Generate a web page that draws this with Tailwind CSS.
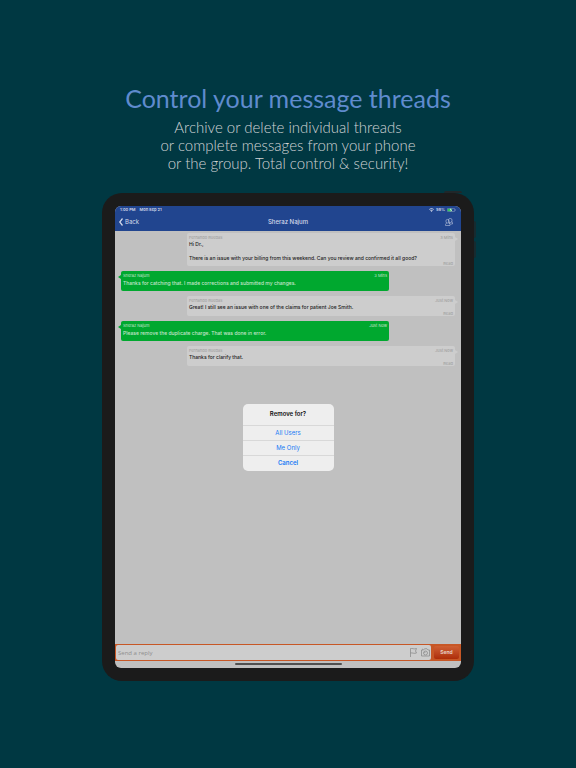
<!DOCTYPE html>
<html lang="en">
<head>
    <meta charset="UTF-8">
    <meta name="viewport" content="width=device-width, initial-scale=1.0">
    <title>Control your message threads</title>
    <script src="https://cdn.jsdelivr.net/npm/@tailwindcss/browser@4"></script>
</head>
<body class="bg-[#003842] min-h-screen font-['Inter',sans-serif]">
    <div class="flex flex-col items-center px-4 pt-20 pb-20">
        <!-- Headline -->
        <header class="text-center font-['Lato',sans-serif] mb-[21px]">
            <h1 class="text-[25px] leading-9 text-[#5f8bce]">Control your message threads</h1>
            <p class="text-[15px] leading-[18px] font-light text-[#d0d3d5] mt-0.5">
                Archive or delete individual threads<br>
                or complete messages from your phone<br>
                or the group. Total control &amp; security!
            </p>
        </header>

        <!-- Tablet -->
        <div class="relative w-full max-w-[372px] bg-[#1b1b1b] rounded-[20px] p-[13px]">
            <span class="absolute -top-0.5 right-3 w-[18px] h-0.5 bg-[#20272a] rounded-t-sm"></span>
            <span class="absolute top-7 -right-0.5 w-0.5 h-[17px] bg-[#162b30] rounded-r-sm"></span>
            <span class="absolute top-12 -right-0.5 w-0.5 h-[17px] bg-[#162b30] rounded-r-sm"></span>

            <div class="relative flex flex-col min-h-[462px] bg-[#c0c0c0] rounded-[6px] overflow-hidden">
                <!-- Status bar and navigation -->
                <div class="bg-[#21458f] text-[#d4daea] h-[25px] flex flex-col">
                    <div class="flex justify-between items-center h-2 px-[5px] text-[4px] leading-none font-semibold">
                        <div class="flex gap-1"><span>1:00 PM</span><span>Mon Sep 21</span></div>
                        <div class="flex items-center gap-0.5">
                            <svg class="w-[5px] h-1" viewBox="0 0 20 16" fill="currentColor"><path d="M10 16l3-4a5 5 0 0 0-6 0zM4 9l2 2a7 7 0 0 1 8 0l2-2a10 10 0 0 0-12 0zM0 5l2 2a13 13 0 0 1 16 0l2-2a16 16 0 0 0-20 0z"/></svg>
                            <span>59%</span>
                            <svg class="w-[9px] h-1" viewBox="0 0 27 12"><rect x="1" y="1" width="22" height="10" rx="3" fill="none" stroke="#8c9cc4" stroke-width="2"/><rect x="2" y="2" width="13" height="8" rx="1" fill="#32c759"/><path d="M12 0L8 7h4l-1 5 5-7h-4z" fill="#d4daea"/><path d="M25 4v4" stroke="#8c9cc4" stroke-width="2"/></svg>
                        </div>
                    </div>
                    <div class="grid grid-cols-3 items-center flex-1 px-1 pb-px text-[6px] leading-none">
                        <button type="button" class="flex items-center gap-0.5">
                            <svg class="w-1 h-2" viewBox="0 0 8 16" fill="none" stroke="currentColor" stroke-width="2.500"><path d="M7 1L1.500 8 7 15"/></svg>
                            Back
                        </button>
                        <h2 class="text-center font-medium">Sheraz Najum</h2>
                        <button type="button" aria-label="Group members" class="justify-self-end mr-1">
                            <svg class="w-2 h-2 block" viewBox="0 0 16 16" fill="none" stroke="currentColor" stroke-width="1"><rect x="7" y="1" width="7" height="8" rx="3"/><rect x="2" y="3" width="6" height="7" rx="2.500"/><path d="M4 10c-2 .5-3 1.500-3 3.500V15h9v-2c0-1.500-1-2.500-3-3M9 9v2l2 1h4V9.500c0-1-.5-1.500-2-2"/></svg>
                        </button>
                    </div>
                </div>

                <!-- Thread -->
                <main class="flex-1 flex flex-col gap-[5px] pt-0.5 px-[6px] text-[5px] leading-[7px] font-medium text-[#202020]">
                    <article class="relative self-end w-[268px] min-h-[33px] bg-[#cdcdcd] rounded-xs px-0.5 py-px">
                        <svg class="absolute -right-[3px] top-1 w-[3px] h-1" viewBox="0 0 3 4" fill="#cdcdcd"><path d="M0 0l3 2-3 2z"/></svg>
                        <div class="flex justify-between text-[4px] text-[#a2a2a2]"><span>Fernando Ruedas</span><span>3 Mins</span></div>
                        <p>Hi Dr.,<br><br>There is an issue with your billing from this weekend. Can you review and confirmed it all good?</p>
                        <span class="absolute right-0.5 bottom-0 text-[4px] leading-[5px] text-[#a2a2a2]">Read</span>
                    </article>
                    <article class="relative w-[268px] min-h-5 bg-[#00a82f] text-[#c6e5cd] rounded-xs px-0.5 py-px">
                        <svg class="absolute -left-[3px] top-1 w-[3px] h-1" viewBox="0 0 3 4" fill="#00a82f"><path d="M3 0L0 2l3 2z"/></svg>
                        <div class="flex justify-between text-[4px] font-normal"><span>Sheraz Najum</span><span>3 Mins</span></div>
                        <p class="mt-px">Thanks for catching that. I made corrections and submitted my changes.</p>
                    </article>
                    <article class="relative self-end w-[268px] min-h-5 bg-[#cdcdcd] rounded-xs px-0.5 py-px">
                        <svg class="absolute -right-[3px] top-1 w-[3px] h-1" viewBox="0 0 3 4" fill="#cdcdcd"><path d="M0 0l3 2-3 2z"/></svg>
                        <div class="flex justify-between text-[4px] text-[#a2a2a2]"><span>Fernando Ruedas</span><span>Just Now</span></div>
                        <p>Great! I still see an issue with one of the claims for patient Joe Smith.</p>
                        <span class="absolute right-0.5 bottom-0 text-[4px] leading-[5px] text-[#a2a2a2]">Read</span>
                    </article>
                    <article class="relative w-[268px] min-h-5 bg-[#00a82f] text-[#c6e5cd] rounded-xs px-0.5 py-px">
                        <svg class="absolute -left-[3px] top-1 w-[3px] h-1" viewBox="0 0 3 4" fill="#00a82f"><path d="M3 0L0 2l3 2z"/></svg>
                        <div class="flex justify-between text-[4px] font-normal"><span>Sheraz Najum</span><span>Just Now</span></div>
                        <p class="mt-px">Please remove the duplicate charge. That was done in error.</p>
                    </article>
                    <article class="relative self-end w-[268px] min-h-5 bg-[#cdcdcd] rounded-xs px-0.5 py-px">
                        <svg class="absolute -right-[3px] top-1 w-[3px] h-1" viewBox="0 0 3 4" fill="#cdcdcd"><path d="M0 0l3 2-3 2z"/></svg>
                        <div class="flex justify-between text-[4px] text-[#a2a2a2]"><span>Fernando Ruedas</span><span>Just Now</span></div>
                        <p>Thanks for clarify that.</p>
                        <span class="absolute right-0.5 bottom-0 text-[4px] leading-[5px] text-[#a2a2a2]">Read</span>
                    </article>
                </main>

                <!-- Reply bar -->
                <form class="flex items-stretch gap-[3px] h-[17px] bg-[#c75726] py-px pl-px pr-0.5">
                    <div class="flex flex-1 items-center gap-1 bg-[#cdcdcd] rounded-xs px-px text-[#8a8a8a]">
                        <input type="text" aria-label="Send a reply" placeholder="Send a reply" class="flex-1 min-w-0 h-full text-[6px] px-px font-['Open_Sans',sans-serif] placeholder:text-[#8f8f8f] outline-none">
                        <button type="button" aria-label="Flag">
                            <svg class="w-[7px] h-[9px] block" viewBox="0 0 14 18" fill="none" stroke="currentColor" stroke-width="1.500"><path d="M1 18V1c4-1 6 2 12 0l-2 5 2 4c-5 2-8-1-12 0"/></svg>
                        </button>
                        <button type="button" aria-label="Camera">
                            <svg class="w-[9px] h-[9px] block" viewBox="0 0 18 18" fill="none" stroke="currentColor" stroke-width="1.500"><path d="M1 4h4l2-2.500h5L14 4h3v12H1z"/><circle cx="9" cy="10" r="4"/><path d="M7 10a2 2 0 0 1 2-2M2 2.500h2"/></svg>
                        </button>
                    </div>
                    <button type="submit" class="w-[25px] my-px rounded-xs bg-linear-to-b from-[#cf6033] to-[#ad2c08] text-[5px] font-bold text-[#e4cbc0]">Send</button>
                </form>
                <div class="h-[7px] flex justify-center items-start pt-0.5">
                    <div class="w-[107px] h-0.5 rounded-full bg-[#505050]"></div>
                </div>

                <!-- Remove dialog -->
                <div role="dialog" aria-labelledby="removeTitle" class="absolute inset-0 m-auto w-[91px] h-[67px] flex flex-col bg-[#eeeeee] rounded-[5px] text-[6px] leading-none text-[#1679f5] divide-y divide-[#d8d8d8]">
                    <h3 id="removeTitle" class="h-[22px] flex items-center justify-center font-semibold text-[#111111]">Remove for?</h3>
                    <button type="button" class="flex-1">All Users</button>
                    <button type="button" class="flex-1">Me Only</button>
                    <button type="button" class="flex-1 font-semibold">Cancel</button>
                </div>
            </div>
        </div>
    </div>
</body>
</html>
